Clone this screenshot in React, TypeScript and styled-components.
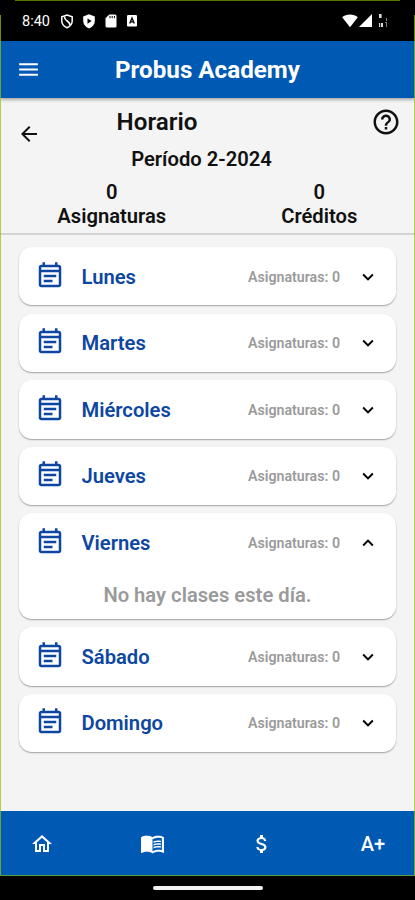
import React from 'react';
import styled, { createGlobalStyle } from 'styled-components';
import {
  MdMenu,
  MdArrowBack,
  MdHelpOutline,
  MdOutlineEventNote,
  MdKeyboardArrowDown,
  MdKeyboardArrowUp,
  MdOutlineHome,
  MdMenuBook,
  MdAttachMoney,
} from 'react-icons/md';

const GlobalStyle = createGlobalStyle`
  * { box-sizing: border-box; }
  body { margin: 0; background: #000; font-family: Roboto, 'Liberation Sans', sans-serif; }
  svg { display: block; flex: none; }
`;

const Screen = styled.div`
  position: relative;
  width: 415px;
  height: 900px;
  display: flex;
  flex-direction: column;
  background: #000;
  overflow: hidden;
`;

const StatusBar = styled.header`
  height: 41px;
  flex: none;
  display: flex;
  align-items: center;
  justify-content: space-between;
  padding: 1px 27px 0 22px;
  color: #fff;
`;

const StatusGroup = styled.div`
  display: flex;
  align-items: center;
  gap: 10px;
`;

const Clock = styled.span`
  width: 29px;
  padding-top: 1px;
  font-size: 14.5px;
  line-height: 16px;
  white-space: nowrap;
`;

const AppBar = styled.div`
  position: relative;
  z-index: 1;
  height: 57px;
  flex: none;
  display: grid;
  grid-template-columns: 56px 1fr 56px;
  align-items: center;
  background: #0059b3;
  color: #fff;
  box-shadow: 0 1px 4px rgba(0, 0, 0, 0.45);
`;

const MenuButton = styled.div`
  padding-left: 16px;
`;

const AppTitle = styled.h1`
  margin: 0;
  text-align: center;
  font-size: 24.2px;
  line-height: 30px;
  font-weight: 700;
  white-space: nowrap;
`;

const Summary = styled.section`
  height: 137px;
  flex: none;
  display: flex;
  flex-direction: column;
  background: #f4f4f4;
  border-bottom: 2px solid #d3d3d3;
  color: #111;
`;

const Heading = styled.div`
  height: 83px;
  display: grid;
  grid-template-columns: 56px 1fr 56px;
`;

const BackButton = styled.div`
  padding: 24px 0 0 17px;
`;

const HelpButton = styled.div`
  padding: 9px 0 0 11.5px;
`;

const HeadingText = styled.div`
  display: flex;
  flex-direction: column;
  padding-top: 9px;
`;

const PageTitle = styled.h2`
  margin: 0;
  padding-right: 101px;
  text-align: center;
  font-size: 24.2px;
  line-height: 30px;
  font-weight: 600;
`;

const Period = styled.p`
  margin: 10px 0 0;
  padding-right: 12px;
  text-align: center;
  font-size: 20.2px;
  line-height: 24px;
  font-weight: 600;
`;

const Totals = styled.div`
  display: grid;
  grid-template-columns: 1fr 1fr;
  padding-left: 8px;
`;

const Total = styled.div<{ $shift: number }>`
  padding-left: ${(p) => p.$shift}px;
  text-align: center;
  font-size: 20.2px;
  line-height: 23.5px;
  font-weight: 600;
`;

const DayList = styled.main`
  flex: 1;
  display: flex;
  flex-direction: column;
  gap: 8.2px;
  padding: 12px 19px 0;
  background: #f4f4f4;
`;

const DayCard = styled.article<{ $open?: boolean }>`
  height: ${(p) => (p.$open ? 105.8 : 58.4)}px;
  flex: none;
  border-radius: 13px;
  background: #fff;
  box-shadow: 0 1px 1.5px rgba(0, 0, 0, 0.35);
`;

const DayRow = styled.div`
  height: 59px;
  display: flex;
  align-items: center;
  padding: 0 17px 0 16px;
`;

const DayIcon = styled.div`
  padding-bottom: 2px;
  color: #0d47a1;
`;

const DayName = styled.h3`
  flex: 1;
  margin: 0 0 0 16.5px;
  color: #0d47a1;
  font-size: 20.2px;
  line-height: 24px;
  font-weight: 600;
`;

const Count = styled.span`
  margin-right: 17px;
  color: #9a9a9a;
  font-size: 14.2px;
  line-height: 18px;
  font-weight: 600;
`;

const Empty = styled.p`
  margin: 10px 0 0;
  text-align: center;
  color: #9a9a9a;
  font-size: 20.2px;
  line-height: 26px;
  font-weight: 600;
`;

const TabBar = styled.nav`
  height: 64px;
  flex: none;
  display: grid;
  grid-template-columns: 84px 136px 84px 1fr;
  align-items: center;
  justify-items: center;
  padding-top: 1px;
  background: #0059b3;
  color: #fff;
`;

const Grade = styled.span`
  padding-left: 27px;
  font-size: 20px;
  line-height: 24px;
  font-weight: 500;
`;

const GestureArea = styled.footer`
  height: 25px;
  flex: none;
  display: flex;
  justify-content: center;
  padding-top: 10.5px;
`;

const GestureHandle = styled.div`
  width: 110px;
  height: 4px;
  border-radius: 2px;
  background: #f2f2f2;
`;

const FrameOutline = styled.div`
  position: absolute;
  inset: 0 0 24px 0;
  z-index: 2;
  border: 1px solid rgba(148, 196, 0, 0.72);
  border-top-color: #587500;
  border-bottom-color: #55a043;
  pointer-events: none;
`;

const FrameCorner = styled.div<{ $right?: boolean }>`
  position: absolute;
  top: 0;
  ${(p) => (p.$right ? 'right: 0;' : 'left: 0;')}
  z-index: 3;
  width: 15px;
  height: 15px;
  background: #000;
`;

const days = ['Lunes', 'Martes', 'Miércoles', 'Jueves', 'Viernes', 'Sábado', 'Domingo'];

const PrivacyIcon = () => (
  <svg width="12" height="15" viewBox="0 0 12 15" fill="none" stroke="#fff">
    <path strokeWidth="1.5" d="M6 1 11.2 2.8V7c0 3-2 5.4-5.2 6.7C2.8 12.4.8 10 .8 7V2.8Z" />
    <path strokeWidth="1.6" d="M3.4 2.5C3.4 7.500 8.800 6.500 9 11.300" />
  </svg>
);

const ShieldIcon = () => (
  <svg width="12" height="15" viewBox="0 0 12 15">
    <path fill="#fff" d="M6 .3 11.8 2.500V7c0 3.500-2.400 6-5.800 7.500C2.600 13 .2 10.500.2 7V2.500Z" />
    <path fill="#000" d="M4.500 4.500 8.700 7.100 4.500 9.700Z" />
  </svg>
);

const CardIcon = () => (
  <svg width="12" height="14" viewBox="0 0 12 14">
    <path fill="#fff" d="M4.3.5H10Q11.5.5 11.5 2V12Q11.5 13.5 10 13.5H2Q.5 13.5.5 12V4.3Z" />
    <path stroke="#000" strokeWidth="1" d="M5 2v2.2M7.200 2v2.200M9.400 2v2.200" />
  </svg>
);

const LetterIcon = () => (
  <svg width="10" height="12" viewBox="0 0 10 12">
    <rect width="10" height="11.5" rx="1.2" fill="#fff" />
    <path stroke="#000" strokeWidth="1.3" fill="none" d="M2.7 8.500 5 3l2.300 5.500M3.500 6.900h3" />
  </svg>
);

const SignalIcons = () => (
  <svg width="46" height="14" viewBox="0 0 46 14" fill="#fff">
    <path d="M.2 3.200C4-.4 12-.4 15.800 3.200L8 13.200Z" />
    <path d="M30 0V13H17Z" />
    <path d="M37 0h2.600v4H37zM37 9h1.200v4H37zM39 9h2v4h-2z" fillOpacity=".85" />
    <path d="M44 4h1v3h-1zM43 8h2v1h-2zM44 9h1v4h-1z" fillOpacity=".5" />
  </svg>
);

export default function App() {
  return (
    <>
      <GlobalStyle />
      <Screen>
        <StatusBar>
          <StatusGroup>
            <Clock>8:40</Clock>
            <PrivacyIcon />
            <ShieldIcon />
            <CardIcon />
            <LetterIcon />
          </StatusGroup>
          <SignalIcons />
        </StatusBar>
        <AppBar>
          <MenuButton>
            <MdMenu size={25} />
          </MenuButton>
          <AppTitle>Probus Academy</AppTitle>
        </AppBar>
        <Summary>
          <Heading>
            <BackButton>
              <MdArrowBack size={24} />
            </BackButton>
            <HeadingText>
              <PageTitle>Horario</PageTitle>
              <Period>Período 2-2024</Period>
            </HeadingText>
            <HelpButton>
              <MdHelpOutline size={30} />
            </HelpButton>
          </Heading>
          <Totals>
            <Total $shift={4}>
              0<br />
              Asignaturas
            </Total>
            <Total $shift={12}>
              0<br />
              Créditos
            </Total>
          </Totals>
        </Summary>
        <DayList>
          {days.map((day) => {
            const open = day === 'Viernes';
            return (
              <DayCard key={day} $open={open}>
                <DayRow>
                  <DayIcon>
                    <MdOutlineEventNote size={30} />
                  </DayIcon>
                  <DayName>{day}</DayName>
                  <Count>Asignaturas: 0</Count>
                  {open ? <MdKeyboardArrowUp size={22} /> : <MdKeyboardArrowDown size={22} />}
                </DayRow>
                {open && <Empty>No hay clases este día.</Empty>}
              </DayCard>
            );
          })}
        </DayList>
        <TabBar>
          <MdOutlineHome size={24} />
          <MdMenuBook size={25} />
          <MdAttachMoney size={24} />
          <Grade>A+</Grade>
        </TabBar>
        <GestureArea>
          <GestureHandle />
        </GestureArea>
        <FrameOutline />
        <FrameCorner />
        <FrameCorner $right />
      </Screen>
    </>
  );
}
